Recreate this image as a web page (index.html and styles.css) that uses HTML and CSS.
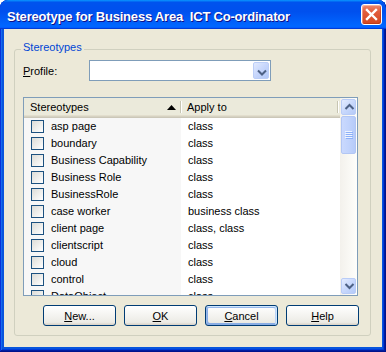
FILE: index.html
```html
<!DOCTYPE html>
<html>
<head>
<meta charset="utf-8">
<title>Stereotype for Business Area ICT Co-ordinator</title>
<link rel="stylesheet" href="styles.css">
</head>
<body>
<div class="window">
  <div class="titlebar">
    <span class="title">Stereotype for Business Area&nbsp; ICT Co-ordinator</span>
    <div class="close">
      <svg width="19" height="19" viewBox="0 0 19 19"><path d="M5 5 L14 14 M14 5 L5 14" stroke="#fff" stroke-width="2.4" stroke-linecap="square" fill="none"/></svg>
    </div>
  </div>
  <div class="client">
    <div class="group">
      <span class="legend">Stereotypes</span>
      <div class="profile-row">
        <span class="lbl"><u>P</u>rofile:</span>
        <div class="combo">
          <div class="combo-btn">
            <svg width="16" height="19" viewBox="0 0 16 19"><polyline points="4,7.5 8,11.5 12,7.5" stroke="#4D6185" stroke-width="2" fill="none"/></svg>
          </div>
        </div>
      </div>
      <div class="list">
        <div class="list-main">
          <div class="header">
            <div class="hcol hcol1"><span>Stereotypes</span><svg width="9" height="5" viewBox="0 0 9 5"><polygon points="0,5 4.5,0 9,5" fill="#000"/></svg></div>
            <div class="sep"></div>
            <div class="hcol hcol2">Apply to</div>
            <div class="sep"></div>
          </div>
          <div class="rows">
            <div class="row"><div class="c1"><span class="cb"></span>asp page</div><div class="c2">class</div></div>
            <div class="row"><div class="c1"><span class="cb"></span>boundary</div><div class="c2">class</div></div>
            <div class="row"><div class="c1"><span class="cb"></span>Business Capability</div><div class="c2">class</div></div>
            <div class="row"><div class="c1"><span class="cb"></span>Business Role</div><div class="c2">class</div></div>
            <div class="row"><div class="c1"><span class="cb"></span>BusinessRole</div><div class="c2">class</div></div>
            <div class="row"><div class="c1"><span class="cb"></span>case worker</div><div class="c2">business class</div></div>
            <div class="row"><div class="c1"><span class="cb"></span>client page</div><div class="c2">class, class</div></div>
            <div class="row"><div class="c1"><span class="cb"></span>clientscript</div><div class="c2">class</div></div>
            <div class="row"><div class="c1"><span class="cb"></span>cloud</div><div class="c2">class</div></div>
            <div class="row"><div class="c1"><span class="cb"></span>control</div><div class="c2">class</div></div>
            <div class="row"><div class="c1"><span class="cb"></span>DataObject</div><div class="c2">class</div></div>
          </div>
        </div>
        <div class="vscroll">
          <div class="sbtn">
            <svg width="15" height="14" viewBox="0 0 15 14"><polyline points="3.5,9 7.5,5 11.5,9" stroke="#4D6185" stroke-width="2" fill="none"/></svg>
          </div>
          <div class="thumb">
            <svg width="8" height="8" viewBox="0 0 8 8"><path d="M0 0.5H7M0 2.5H7M0 4.5H7M0 6.5H7" stroke="#EEF4FE" stroke-width="1"/><path d="M1 1.5H8M1 3.5H8M1 5.5H8M1 7.5H8" stroke="#8CB0F8" stroke-width="1"/></svg>
          </div>
          <div class="track"></div>
          <div class="sbtn">
            <svg width="15" height="14" viewBox="0 0 15 14"><polyline points="3.5,5 7.5,9 11.5,5" stroke="#4D6185" stroke-width="2" fill="none"/></svg>
          </div>
        </div>
      </div>
      <div class="buttons">
        <button class="btn"><u>N</u>ew...</button>
        <button class="btn"><u>O</u>K</button>
        <button class="btn btn-default"><u>C</u>ancel</button>
        <button class="btn"><u>H</u>elp</button>
      </div>
    </div>
  </div>
</div>
</body>
</html>
```
FILE: styles.css
```css
* { box-sizing: border-box; }
html, body { margin: 0; padding: 0; }
body {
  width: 386px;
  height: 352px;
  overflow: hidden;
  background: #ffffff;
  font-family: "Liberation Sans", Arial, sans-serif;
  font-size: 11px;
  color: #000;
}
.window {
  width: 386px;
  height: 352px;
  display: flex;
  flex-direction: column;
  background: #0855dd;
  border-radius: 8px 8px 0 0;
  overflow: hidden;
  box-shadow: inset -1px -1px #00138c, inset 1px 1px #0831d9, inset -2px -2px #001ea0, inset 2px 2px #166aee, inset -3px -3px #003bda, inset 3px 3px #0855dd;
}
.titlebar {
  height: 29px;
  flex: none;
  display: flex;
  align-items: center;
  justify-content: space-between;
  padding: 0 4px 0 7px;
  background: linear-gradient(180deg, #0997ff, #0053ee 8%, #0050ee 40%, #0066ff 88%, #0066ff 93%, #005bff 95%, #003dd7 96%, #003dd7);
  border-radius: 8px 8px 0 0;
}
.title {
  color: #fff;
  font-weight: bold;
  font-size: 13px;
  padding-top: 3px;
  letter-spacing: -0.2px;
  text-shadow: 1px 1px #0f1089;
  white-space: nowrap;
}
.close {
  width: 21px;
  height: 21px;
  border: 1px solid #fff;
  border-radius: 3px;
  background: linear-gradient(180deg, #ee8a70 0%, #e25d3d 35%, #d4481f 100%);
  box-shadow: inset 1px 1px rgba(255, 255, 255, 0.35), inset -1px -1px rgba(160, 40, 10, 0.4);
  display: flex;
  align-items: center;
  justify-content: center;
}
.close svg { display: block; }
.client {
  flex: 1;
  min-height: 0;
  margin: 0 4px 5px 4px;
  background: #ECE9D8;
  display: flex;
  flex-direction: column;
}
.group {
  position: relative;
  flex: 1;
  min-height: 0;
  margin: 20px 11px 11px 10px;
  border: 1px solid #D0D0BF;
  border-radius: 3px;
  padding: 10px 11px 0 8px;
  display: flex;
  flex-direction: column;
}
.legend {
  position: absolute;
  top: -9px;
  left: 6px;
  padding: 0 2px;
  line-height: 13px;
  color: #0046D5;
  background: #ECE9D8;
}
.profile-row {
  height: 21px;
  flex: none;
  display: flex;
  align-items: center;
}
.lbl { width: 66px; }
.combo {
  width: 182px;
  height: 21px;
  border: 1px solid #7F9DB9;
  background: #fff;
  padding: 1px;
  display: flex;
  justify-content: flex-end;
}
.combo-btn {
  width: 16px;
  height: 100%;
  border: 1px solid #BCCEF7;
  border-radius: 2px;
  background: linear-gradient(135deg, #E2EAFE 0%, #C6D6FC 50%, #B2C8F7 100%);
}
.combo-btn svg, .sbtn svg { display: block; }
.list {
  margin-top: 16px;
  width: 335px;
  height: 199px;
  flex: none;
  border: 1px solid #7F9DB9;
  background: #fff;
  display: flex;
}
.list-main {
  flex: 1;
  min-width: 0;
  display: flex;
  flex-direction: column;
  overflow: hidden;
}
.header {
  height: 20px;
  flex: none;
  display: flex;
  align-items: center;
  padding-bottom: 2px;
  background: #EBEADB;
  box-shadow: inset 0 -1px #CBC7B8, inset 0 -2px #D6D2C2, inset 0 -3px #E2DECD;
}
.hcol { white-space: nowrap; }
.hcol1 {
  width: 156px;
  display: flex;
  align-items: center;
  justify-content: space-between;
  padding: 0 4px 0 6px;
}
.hcol1 svg { display: block; }
.hcol2 {
  width: 155px;
  padding-left: 5px;
}
.sep {
  width: 2px;
  height: 12px;
  border-left: 1px solid #C7C5B2;
  border-right: 1px solid #fff;
}
.rows {
  flex: 1;
  min-height: 0;
  overflow: hidden;
}
.row {
  height: 17px;
  display: flex;
  line-height: 17px;
  white-space: nowrap;
}
.c1 {
  width: 157px;
  background: #F7F7F7;
  display: flex;
  align-items: center;
  padding-left: 7px;
}
.c2 {
  flex: 1;
  padding-left: 7px;
}
.cb {
  width: 13px;
  height: 13px;
  flex: none;
  margin-right: 7px;
  border: 1px solid #1C5180;
  background: linear-gradient(135deg, #DCDCD7 0%, #FFFFFF 100%);
}
.vscroll {
  width: 17px;
  flex: none;
  padding: 1px;
  display: flex;
  flex-direction: column;
  background: linear-gradient(90deg, #F3F1EC, #FEFEFB);
}
.sbtn {
  height: 16px;
  flex: none;
  border: 1px solid #B9CCF7;
  border-radius: 2px;
  background: linear-gradient(135deg, #E4ECFF 0%, #C8D8FC 50%, #B4CAF8 100%);
}
.thumb {
  margin-top: 1px;
  height: 38px;
  flex: none;
  border: 1px solid #B2C6F4;
  border-radius: 2px;
  background: linear-gradient(90deg, #CAD9FD 0%, #C1D3FC 50%, #B6CBF9 100%);
  display: flex;
  align-items: center;
  justify-content: center;
}
.thumb svg { display: block; }
.track { flex: 1; }
.buttons {
  margin-top: 9px;
  flex: none;
  display: flex;
  justify-content: flex-end;
  gap: 8px;
}
.btn {
  width: 73px;
  height: 21px;
  padding: 0;
  font-family: "Liberation Sans", Arial, sans-serif;
  font-size: 11px;
  color: #000;
  border: 1px solid #003C74;
  border-radius: 3px;
  background: linear-gradient(180deg, #ffffff, #ecebe5 86%, #d8d0c4);
}
.btn-default {
  box-shadow: inset -1px 1px #cee7ff, inset 1px 2px #98b8ea, inset -2px 2px #bcd4f6, inset 1px -1px #89ade4, inset 2px -2px #89ade4;
}
```
